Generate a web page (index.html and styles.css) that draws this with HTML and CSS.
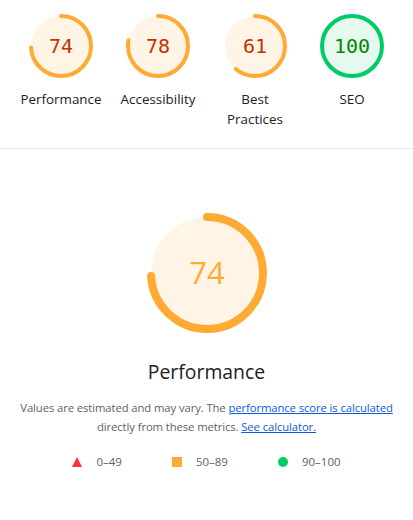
FILE: index.html
```html
<!DOCTYPE html>
<html>
<head>
<meta charset="utf-8">
<link rel="stylesheet" href="styles.css">
</head>
<body>
<div class="scores">
  <div class="gauge">
    <svg class="ring" viewBox="0 0 64 64" width="64" height="64">
      <circle class="base avg" cx="32" cy="32" r="30"/>
      <circle class="arc avg" cx="32" cy="32" r="30" stroke-dasharray="139.5 188.5" transform="rotate(-90 32 32)"/>
      <text class="num avg" x="32" y="39" text-anchor="middle">74</text>
    </svg>
    <div class="label">Performance</div>
  </div>
  <div class="gauge">
    <svg class="ring" viewBox="0 0 64 64" width="64" height="64">
      <circle class="base avg" cx="32" cy="32" r="30"/>
      <circle class="arc avg" cx="32" cy="32" r="30" stroke-dasharray="147 188.5" transform="rotate(-90 32 32)"/>
      <text class="num avg" x="32" y="39" text-anchor="middle">78</text>
    </svg>
    <div class="label">Accessibility</div>
  </div>
  <div class="gauge">
    <svg class="ring" viewBox="0 0 64 64" width="64" height="64">
      <circle class="base avg" cx="32" cy="32" r="30"/>
      <circle class="arc avg" cx="32" cy="32" r="30" stroke-dasharray="115 188.5" transform="rotate(-90 32 32)"/>
      <text class="num avg" x="32" y="39" text-anchor="middle">61</text>
    </svg>
    <div class="label">Best<br>Practices</div>
  </div>
  <div class="gauge">
    <svg class="ring" viewBox="0 0 64 64" width="64" height="64">
      <circle class="base pass" cx="32" cy="32" r="30"/>
      <circle class="arc pass" cx="32" cy="32" r="30" stroke-dasharray="188.5 188.5" transform="rotate(-90 32 32)"/>
      <text class="num pass" x="32" y="39" text-anchor="middle">100</text>
    </svg>
    <div class="label">SEO</div>
  </div>
</div>
<div class="detail">
  <svg class="big" viewBox="0 0 120 120" width="120" height="120">
    <circle class="base avg" cx="60" cy="60" r="56"/>
    <circle class="bigarc" cx="60" cy="60" r="56" stroke-dasharray="260.4 351.9" transform="rotate(-90 60 60)"/>
    <text class="bignum" x="60" y="71" text-anchor="middle">74</text>
  </svg>
  <div class="title">Performance</div>
  <p class="desc">Values are estimated and may vary. The <a href="#">performance score is calculated</a> directly from these metrics. <a href="#">See calculator.</a></p>
  <div class="legend">
    <span class="item"><svg width="10" height="10" viewBox="0 0 10 10"><polygon points="5,0 10,10 0,10" fill="#ff3333"/></svg>0–49</span>
    <span class="item"><span class="sq"></span>50–89</span>
    <span class="item"><span class="dot"></span>90–100</span>
  </div>
</div>
</body>
</html>
```
FILE: styles.css
```css
html, body {
  margin: 0;
  padding: 0;
  background: #fff;
}
body {
  font-family: "Segoe UI", "Open Sans", "Noto Sans", sans-serif;
  color: #212121;
}
.scores {
  display: flex;
  justify-content: center;
  padding: 14px 0 19px;
  border-bottom: 1px solid #ebebeb;
}
.gauge {
  width: 97px;
  display: flex;
  flex-direction: column;
  align-items: center;
}
.ring { display: block; }
.base { stroke: none; }
.base.avg { fill: #fff5e7; }
.base.pass { fill: #e5f9ef; }
.arc { fill: none; stroke-width: 4; stroke-linecap: round; }
.arc.avg { stroke: #ffaa33; }
.arc.pass { stroke: #00cc66; }
.num {
  font-family: "DejaVu Sans Mono", "Liberation Mono", monospace;
  font-size: 20px;
}
.num.avg { fill: #c33300; }
.num.pass { fill: #008800; }
.label {
  margin-top: 11px;
  font-size: 13.4px;
  line-height: 20px;
  text-align: center;
  color: #212121;
}
.detail {
  display: flex;
  flex-direction: column;
  align-items: center;
  padding-top: 64px;
}
.big { display: block; }
.bigarc { fill: none; stroke: #ffaa33; stroke-width: 8; stroke-linecap: round; }
.bignum {
  fill: #ffaa33;
  font-size: 31px;
}
.title {
  margin-top: 25px;
  font-size: 19.4px;
  line-height: 28px;
  color: #212121;
}
.desc {
  margin: 12px 0 0;
  padding: 0;
  font-size: 11.3px;
  letter-spacing: -0.1px;
  line-height: 19px;
  text-align: center;
  color: #616161;
}
.desc a { color: #0b5bdb; }
.legend {
  display: flex;
  justify-content: center;
  gap: 50px;
  margin-top: 17px;
  font-size: 11.5px;
  line-height: 18px;
  color: #616161;
}
.item {
  display: flex;
  align-items: center;
  gap: 14px;
}
.sq { width: 10px; height: 10px; background: #ffaa33; display: inline-block; }
.dot { width: 10px; height: 10px; border-radius: 50%; background: #00cc66; display: inline-block; }
```
